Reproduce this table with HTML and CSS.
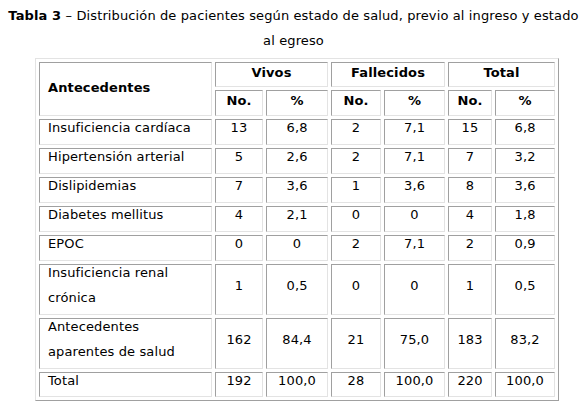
FILE: index.html
```html
<!DOCTYPE html>
<html lang="es">
<head>
<meta charset="utf-8">
<title>Tabla 3</title>
<link rel="stylesheet" href="styles.css">
</head>
<body>
<p class="caption"><b>Tabla 3</b> – Distribución de pacientes según estado de salud, previo al ingreso y estado<br>al egreso</p>
<table class="data">
  <colgroup>
    <col class="c-name"><col class="c-n1"><col class="c-p1"><col class="c-n2"><col class="c-p2"><col class="c-n3"><col class="c-p3">
  </colgroup>
  <thead>
    <tr class="h1">
      <th rowspan="2" class="left"><p>Antecedentes</p></th>
      <th colspan="2"><p>Vivos</p></th>
      <th colspan="2"><p>Fallecidos</p></th>
      <th colspan="2"><p>Total</p></th>
    </tr>
    <tr class="h2">
      <th><p>No.</p></th><th><p>%</p></th>
      <th><p>No.</p></th><th><p>%</p></th>
      <th><p>No.</p></th><th><p>%</p></th>
    </tr>
  </thead>
  <tbody>
    <tr><td class="left"><p>Insuficiencia cardíaca</p></td><td><p>13</p></td><td><p>6,8</p></td><td><p>2</p></td><td><p>7,1</p></td><td><p>15</p></td><td><p>6,8</p></td></tr>
    <tr><td class="left"><p>Hipertensión arterial</p></td><td><p>5</p></td><td><p>2,6</p></td><td><p>2</p></td><td><p>7,1</p></td><td><p>7</p></td><td><p>3,2</p></td></tr>
    <tr><td class="left"><p>Dislipidemias</p></td><td><p>7</p></td><td><p>3,6</p></td><td><p>1</p></td><td><p>3,6</p></td><td><p>8</p></td><td><p>3,6</p></td></tr>
    <tr><td class="left"><p>Diabetes mellitus</p></td><td><p>4</p></td><td><p>2,1</p></td><td><p>0</p></td><td><p>0</p></td><td><p>4</p></td><td><p>1,8</p></td></tr>
    <tr><td class="left"><p>EPOC</p></td><td><p>0</p></td><td><p>0</p></td><td><p>2</p></td><td><p>7,1</p></td><td><p>2</p></td><td><p>0,9</p></td></tr>
    <tr><td class="left"><p>Insuficiencia renal crónica</p></td><td><p>1</p></td><td><p>0,5</p></td><td><p>0</p></td><td><p>0</p></td><td><p>1</p></td><td><p>0,5</p></td></tr>
    <tr><td class="left"><p>Antecedentes aparentes de salud</p></td><td><p>162</p></td><td><p>84,4</p></td><td><p>21</p></td><td><p>75,0</p></td><td><p>183</p></td><td><p>83,2</p></td></tr>
    <tr class="total"><td class="left"><p>Total</p></td><td><p>192</p></td><td><p>100,0</p></td><td><p>28</p></td><td><p>100,0</p></td><td><p>220</p></td><td><p>100,0</p></td></tr>
  </tbody>
</table>
</body>
</html>
```
FILE: styles.css
```css
html, body {
  background: #ffffff;
}
body {
  margin: 0;
  padding: 3px 8px 0;
  font-family: Verdana, "DejaVu Sans", sans-serif;
  font-size: 13px;
  letter-spacing: 0.12px;
  color: #000000;
}
.caption {
  margin: 0 0 5px;
  line-height: 25px;
  text-align: center;
}
.data {
  margin-left: 27px;
  table-layout: fixed;
  width: 524px;
  border-collapse: separate;
  border-spacing: 3px;
  border-style: solid;
  border-width: 1px;
  border-color: #e3e3e3 #a0a0a0 #a0a0a0 #e3e3e3;
}
.c-name { width: 173px; }
.c-n1 { width: 48px; }
.c-p1 { width: 62px; }
.c-n2 { width: 50px; }
.c-p2 { width: 61px; }
.c-n3 { width: 44px; }
.c-p3 { width: 60px; }
.data th,
.data td {
  box-sizing: border-box;
  border-style: solid;
  border-width: 1px;
  border-color: #a0a0a0 #e3e3e3 #e3e3e3 #a0a0a0;
  padding: 3px 6px 4px;
  text-align: center;
  vertical-align: middle;
  font-weight: normal;
}
.data th {
  font-weight: bold;
}
.data .left {
  text-align: left;
  padding-left: 8px;
}
.data p {
  margin: -8px 0 0;
  line-height: 25px;
}
.data th p {
  margin: -6px 0 -2px;
}
.data tr.h1 th {
  padding-top: 3px;
  padding-bottom: 3px;
}
.data tr.total td {
  padding-top: 3px;
  padding-bottom: 3px;
}
```
